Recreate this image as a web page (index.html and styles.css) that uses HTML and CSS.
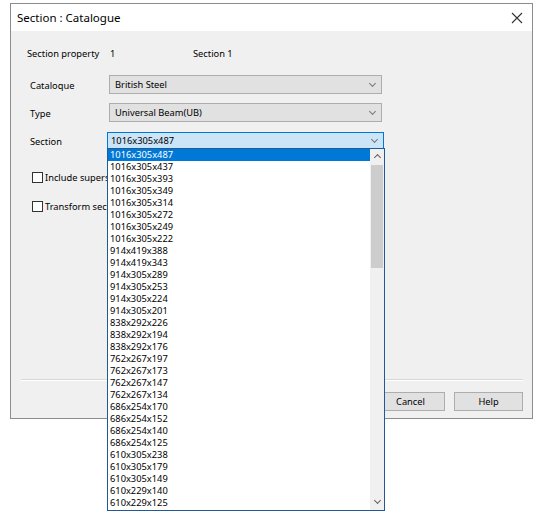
FILE: index.html
```html
<!DOCTYPE html>
<html lang="en">
<head>
    <meta charset="UTF-8">
    <title>Section : Catalogue</title>
    <link rel="stylesheet" href="styles.css">
</head>
<body>
    <div class="dialog">
        <div class="titlebar">
            <span class="title">Section : Catalogue</span>
            <svg class="close" width="12" height="12" viewBox="0 0 12 12">
                <path d="M1 1 L11 11 M11 1 L1 11" stroke="#333" stroke-width="1.1" fill="none"/>
            </svg>
        </div>
        <div class="content">
            <div class="prop-row">
                <span class="prop-label">Section property</span>
                <span class="prop-num">1</span>
                <span>Section 1</span>
            </div>
            <div class="field cat-row">
                <label>Cataloque</label>
                <div class="select">British Steel<span class="chev"></span></div>
            </div>
            <div class="field type-row">
                <label>Type</label>
                <div class="select">Universal Beam(UB)<span class="chev"></span></div>
            </div>
            <div class="field section-row">
                <label>Section</label>
                <div class="select focused">1016x305x487<span class="chev"></span></div>
            </div>
            <div class="check first">
                <span class="box"></span><span class="check-text">Include superseded sections</span>
            </div>
            <div class="check">
                <span class="box"></span><span class="check-text">Transform section</span>
            </div>
            <div class="spacer"></div>
            <div class="separator"></div>
            <div class="buttons">
                <button>OK</button>
                <button>Cancel</button>
                <button>Help</button>
            </div>
        </div>
    </div>

    <!-- open dropdown of the Section combo -->
    <div class="dropdown">
        <ul class="items" id="items"></ul>
        <div class="scrollbar">
            <span class="arrow up"></span>
            <div class="thumb"></div>
            <span class="arrow down"></span>
        </div>
    </div>

    <script>
        const sections = [
            '1016x305x487', '1016x305x437', '1016x305x393', '1016x305x349', '1016x305x314',
            '1016x305x272', '1016x305x249', '1016x305x222', '914x419x388', '914x419x343',
            '914x305x289', '914x305x253', '914x305x224', '914x305x201', '838x292x226',
            '838x292x194', '838x292x176', '762x267x197', '762x267x173', '762x267x147',
            '762x267x134', '686x254x170', '686x254x152', '686x254x140', '686x254x125',
            '610x305x238', '610x305x179', '610x305x149', '610x229x140', '610x229x125'
        ];
        const list = document.getElementById('items');
        sections.forEach((s, i) => {
            const li = document.createElement('li');
            li.textContent = s;
            if (i === 0) li.classList.add('selected');
            list.appendChild(li);
        });
    </script>
</body>
</html>
```
FILE: styles.css
```css
body {
    margin: 0;
    background: #fff;
    font-family: "Noto Sans", "Open Sans", sans-serif;
    font-size: 9.3px;
    color: #000;
}
.dialog {
    margin: 3px 0 0 10px;
    width: 521px;
    height: 414px;
    border: 1px solid #8c8c8c;
    display: flex;
    flex-direction: column;
}
.titlebar {
    height: 27px;
    background: #fff;
    display: flex;
    align-items: center;
    justify-content: space-between;
    padding: 0 9px 0 6px;
}
.title {
    font-size: 11.5px;
}
.content {
    flex: 1;
    background: #f0f0f0;
    display: flex;
    flex-direction: column;
    padding: 0 9px 0 16px;
}
.prop-row {
    display: flex;
    margin-top: 15px;
    height: 14px;
    align-items: center;
}
.prop-label {
    width: 83px;
}
.prop-num {
    width: 83px;
}
.field {
    display: flex;
    align-items: center;
}
.field label {
    width: 79px;
    padding-left: 3px;
    padding-top: 2px;
}
.cat-row {
    margin-top: 15px;
}
.type-row {
    margin-top: 9px;
}
.section-row {
    margin-top: 10px;
}
.select {
    width: 273px;
    height: 19px;
    box-sizing: border-box;
    border: 1px solid #adadad;
    background: #e1e1e1;
    display: flex;
    align-items: center;
    justify-content: space-between;
    padding: 0 6px 0 5px;
}
.select.focused {
    margin-left: -2px;
    width: 277px;
    border-color: #0078d7;
    background: #cce4f7;
    padding-left: 3px;
    height: 17px;
}
.chev {
    width: 4px;
    height: 4px;
    border-right: 1px solid #777;
    border-bottom: 1px solid #777;
    transform: rotate(45deg);
    margin-top: -3px;
}
.check {
    display: flex;
    align-items: center;
    margin-left: 5px;
    height: 12px;
}
.check.first {
    margin-top: 22px;
}
.check + .check {
    margin-top: 17px;
}
.check-text {
    width: 62px;
    overflow: hidden;
    white-space: nowrap;
}
.box {
    width: 11px;
    height: 11px;
    box-sizing: border-box;
    border: 1px solid #333;
    background: #fff;
    margin-right: 2px;
}
.spacer {
    flex: 1;
}
.separator {
    height: 0;
    border-top: 1px solid #d8d8d8;
    border-bottom: 1px solid #fff;
    margin: 0 0 0 -6px;
}
.buttons {
    display: flex;
    justify-content: flex-end;
    gap: 9px;
    margin: 11px 0 7px;
}
.buttons button {
    width: 69px;
    height: 19px;
    box-sizing: border-box;
    border: 1px solid #adadad;
    background: #e1e1e1;
    font: inherit;
    padding: 0;
}
.dropdown {
    position: absolute;
    left: 107px;
    top: 148px;
    width: 278px;
    height: 363px;
    box-sizing: border-box;
    border: 1px solid #1f5a96;
    background: #fff;
    display: flex;
}
.items {
    list-style: none;
    margin: 0;
    padding: 0;
    flex: 1;
}
.items li {
    height: 12px;
    line-height: 12px;
    padding-left: 2px;
}
.items li.selected {
    background: #0078d7;
    color: #fff;
}
.scrollbar {
    width: 14px;
    background: #f0f0f0;
    display: flex;
    flex-direction: column;
    align-items: center;
}
.arrow {
    width: 4px;
    height: 4px;
    border-left: 1px solid #606060;
    border-top: 1px solid #606060;
    transform: rotate(45deg);
    margin-top: 6px;
    margin-bottom: 5px;
}
.arrow.down {
    transform: rotate(225deg);
    margin: auto 0 7px;
}
.thumb {
    width: 12px;
    height: 103px;
    background: #cdcdcd;
}
```
